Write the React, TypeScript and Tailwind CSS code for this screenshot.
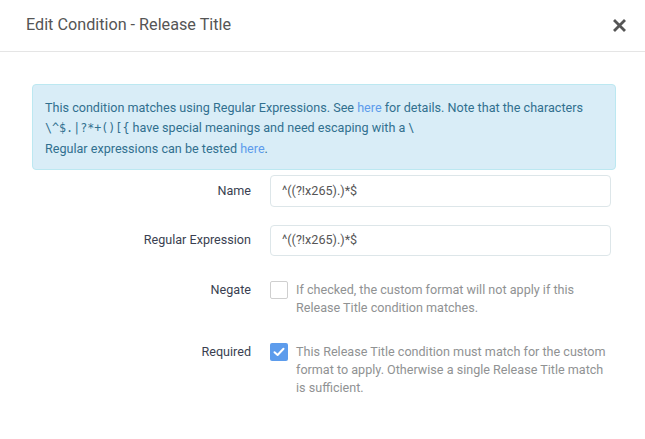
import React from "react";

const font = { fontFamily: "Roboto, 'Open Sans', sans-serif" };

function Check() {
  return (
    <div className="flex h-[18px] w-[18px] shrink-0 items-center justify-center rounded-[2px] bg-[#5d9cec]">
      <svg width="12" height="10" viewBox="0 0 12 10" fill="none">
        <path d="M1.5 5.2 L4.6 8 L10.5 1.8" stroke="white" strokeWidth="2" strokeLinecap="round" strokeLinejoin="round" />
      </svg>
    </div>
  );
}

export default function App() {
  return (
    <div className="h-[439px] w-[645px] overflow-hidden bg-white" style={font}>
      <div className="flex h-[52px] items-center justify-between border-b border-[#e5e5e5] pl-[26px] pr-[19px]">
        <div className="text-[16.2px] text-[#555]">Edit Condition - Release Title</div>
        <svg width="13" height="13" viewBox="0 0 13 13">
          <path d="M2 2 L11 11 M11 2 L2 11" stroke="#555" strokeWidth="2.8" strokeLinecap="square" />
        </svg>
      </div>
      <div className="pl-[32px] pt-[32px]">
        <div className="w-[584px] rounded-[4px] border border-[#bce8f1] bg-[#d9edf7] px-[12px] pb-[11px] pt-[13px] text-[12.6px] leading-[19.8px] text-[#31708f]">
          <div>
            This condition matches using Regular Expressions. See <span className="text-[#5d9cec]">here</span> for details. Note that the characters
          </div>
          <div>
            <code className="text-[11.7px]" style={{ fontFamily: "'DejaVu Sans Mono', monospace" }}>{"\\^$.|?*+()[{"}</code> have special meanings and need escaping with a \
          </div>
          <div>
            Regular expressions can be tested <span className="text-[#5d9cec]">here</span>.
          </div>
        </div>

        <div className="mt-[5px] flex items-center">
          <div className="w-[238px] pr-[19px] text-right text-[12.6px] text-[#3a3f51]">Name</div>
          <div className="flex h-[32px] w-[341px] items-center rounded-[4px] border border-[#dde6e9] px-[11px] text-[12.6px] text-[#555]">
            ^((?!x265).)*$
          </div>
        </div>

        <div className="mt-[18px] flex items-center">
          <div className="w-[238px] pr-[19px] text-right text-[12.6px] text-[#3a3f51]">Regular Expression</div>
          <div className="flex h-[31px] w-[341px] items-center rounded-[4px] border border-[#dde6e9] px-[11px] text-[12.6px] text-[#555]">
            ^((?!x265).)*$
          </div>
        </div>

        <div className="mt-[25px] flex items-start">
          <div className="w-[238px] pr-[19px] text-right text-[12.6px] leading-[18px] text-[#3a3f51]">Negate</div>
          <div className="h-[18px] w-[18px] shrink-0 rounded-[2px] border border-[#cfcfcf] bg-white" />
          <div className="ml-[8px] w-[312px] text-[12.6px] leading-[18px] text-[#909293]">
            If checked, the custom format will not apply if this Release Title condition matches.
          </div>
        </div>

        <div className="mt-[26px] flex items-start">
          <div className="w-[238px] pr-[19px] text-right text-[12.6px] leading-[18px] text-[#3a3f51]">Required</div>
          <Check />
          <div className="ml-[8px] w-[312px] text-[12.6px] leading-[18px] text-[#909293]">
            This Release Title condition must match for the custom format to apply. Otherwise a single Release Title match is sufficient.
          </div>
        </div>
      </div>
    </div>
  );
}
